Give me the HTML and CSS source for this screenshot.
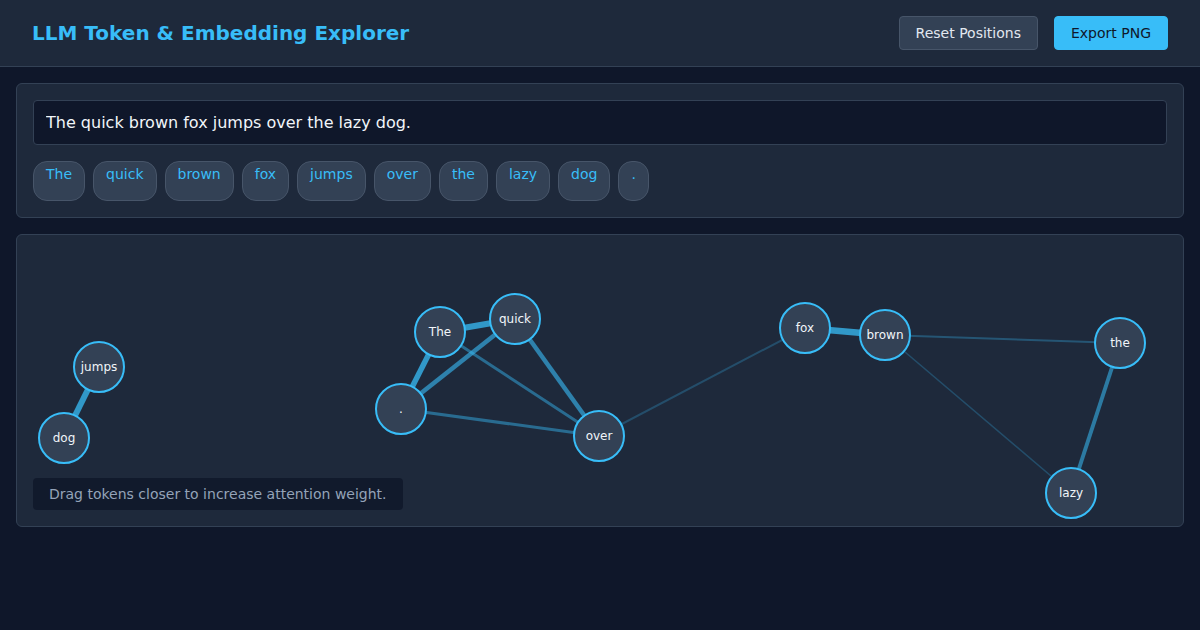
FILE: index.html
```html
<!DOCTYPE html>
<html lang="en">
<head>
    <meta charset="UTF-8">
    <meta name="viewport" content="width=device-width, initial-scale=1.0">
    <title>LLM Token &amp; Embedding Explorer</title>
    <link rel="stylesheet" href="styles.css">
</head>
<body>
    <header class="top-bar">
        <h1>LLM Token &amp; Embedding Explorer</h1>
        <div class="actions">
            <button class="btn btn-secondary" id="resetBtn">Reset Positions</button>
            <button class="btn btn-primary" id="exportBtn">Export PNG</button>
        </div>
    </header>

    <main class="content">
        <!-- Input + token chips -->
        <section class="panel input-panel">
            <input class="text-input" id="textInput" type="text" value="The quick brown fox jumps over the lazy dog.">
            <div class="chips" id="chips">
                <span class="chip">The</span>
                <span class="chip">quick</span>
                <span class="chip">brown</span>
                <span class="chip">fox</span>
                <span class="chip">jumps</span>
                <span class="chip">over</span>
                <span class="chip">the</span>
                <span class="chip">lazy</span>
                <span class="chip">dog</span>
                <span class="chip">.</span>
            </div>
        </section>

        <!-- Embedding canvas -->
        <section class="panel graph-panel">
            <svg class="graph" width="1166" height="291" viewBox="0 0 1166 291">
                <g class="edges">
                    <line x1="82" y1="132" x2="47" y2="203" stroke-width="6" stroke-opacity="0.75"/>
                    <line x1="423" y1="97" x2="498" y2="84" stroke-width="6" stroke-opacity="0.75"/>
                    <line x1="423" y1="97" x2="384" y2="174" stroke-width="5.5" stroke-opacity="0.75"/>
                    <line x1="498" y1="84" x2="384" y2="174" stroke-width="4.5" stroke-opacity="0.6"/>
                    <line x1="498" y1="84" x2="582" y2="201" stroke-width="4.5" stroke-opacity="0.6"/>
                    <line x1="423" y1="97" x2="582" y2="201" stroke-width="3" stroke-opacity="0.45"/>
                    <line x1="384" y1="174" x2="582" y2="201" stroke-width="3" stroke-opacity="0.45"/>
                    <line x1="582" y1="201" x2="788" y2="93" stroke-width="2" stroke-opacity="0.25"/>
                    <line x1="788" y1="93" x2="868" y2="100" stroke-width="6.5" stroke-opacity="0.75"/>
                    <line x1="868" y1="100" x2="1103" y2="108" stroke-width="2" stroke-opacity="0.3"/>
                    <line x1="868" y1="100" x2="1054" y2="258" stroke-width="1.5" stroke-opacity="0.25"/>
                    <line x1="1103" y1="108" x2="1054" y2="258" stroke-width="4" stroke-opacity="0.55"/>
                </g>
                <g class="nodes">
                    <g class="node" transform="translate(82,132)"><circle r="25"/><text dy="4">jumps</text></g>
                    <g class="node" transform="translate(47,203)"><circle r="25"/><text dy="4">dog</text></g>
                    <g class="node" transform="translate(423,97)"><circle r="25"/><text dy="4">The</text></g>
                    <g class="node" transform="translate(498,84)"><circle r="25"/><text dy="4">quick</text></g>
                    <g class="node" transform="translate(384,174)"><circle r="25"/><text dy="4">.</text></g>
                    <g class="node" transform="translate(582,201)"><circle r="25"/><text dy="4">over</text></g>
                    <g class="node" transform="translate(788,93)"><circle r="25"/><text dy="4">fox</text></g>
                    <g class="node" transform="translate(868,100)"><circle r="25"/><text dy="4">brown</text></g>
                    <g class="node" transform="translate(1103,108)"><circle r="25"/><text dy="4">the</text></g>
                    <g class="node" transform="translate(1054,258)"><circle r="25"/><text dy="4">lazy</text></g>
                </g>
            </svg>
            <div class="hint">Drag tokens closer to increase attention weight.</div>
        </section>
    </main>
</body>
</html>
```

FILE: styles.css
```css
* {
    box-sizing: border-box;
}

body {
    margin: 0;
    background: #0f172a;
    color: #e2e8f0;
    font-family: 'DejaVu Sans', sans-serif;
}

.top-bar {
    height: 67px;
    padding: 0 32px;
    display: flex;
    align-items: center;
    justify-content: space-between;
    background: #1e293b;
    border-bottom: 1px solid #334155;
}

.top-bar h1 {
    margin: 0;
    font-size: 20px;
    font-weight: bold;
    color: #38bdf8;
}

.actions {
    display: flex;
    gap: 16px;
}

.btn {
    font-family: inherit;
    font-size: 14px;
    line-height: 18px;
    padding: 7px 16px;
    border-radius: 4px;
    cursor: pointer;
}

.btn-secondary {
    background: #334155;
    color: #e2e8f0;
    border: 1px solid #475569;
}

.btn-primary {
    background: #38bdf8;
    color: #0f172a;
    border: 1px solid #38bdf8;
}

.content {
    padding: 16px;
    display: flex;
    flex-direction: column;
    gap: 16px;
}

.panel {
    background: #1e293b;
    border: 1px solid #334155;
    border-radius: 6px;
}

.input-panel {
    padding: 16px;
    display: flex;
    flex-direction: column;
    gap: 16px;
}

.text-input {
    width: 100%;
    height: 45px;
    padding: 0 12px;
    font-family: inherit;
    font-size: 16px;
    color: #f1f5f9;
    background: #0f172a;
    border: 1px solid #334155;
    border-radius: 4px;
}

.chips {
    display: flex;
    gap: 8px;
}

.chip {
    height: 40px;
    padding: 3px 12px;
    font-size: 14px;
    line-height: 18px;
    color: #38bdf8;
    background: #334155;
    border: 1px solid #475569;
    border-radius: 14px;
}

.graph-panel {
    position: relative;
    height: 293px;
}

.graph {
    display: block;
}

.edges line {
    stroke: #38bdf8;
    stroke-linecap: butt;
}

.node circle {
    fill: #334155;
    stroke: #38bdf8;
    stroke-width: 2;
}

.node text {
    fill: #f1f5f9;
    font-size: 12px;
    text-anchor: middle;
    font-family: 'DejaVu Sans', sans-serif;
}

.hint {
    position: absolute;
    left: 16px;
    bottom: 16px;
    width: 370px;
    padding: 7px 16px;
    font-size: 14px;
    line-height: 18px;
    color: #94a3b8;
    background: rgba(15, 23, 42, 0.85);
    border-radius: 4px;
}
```
